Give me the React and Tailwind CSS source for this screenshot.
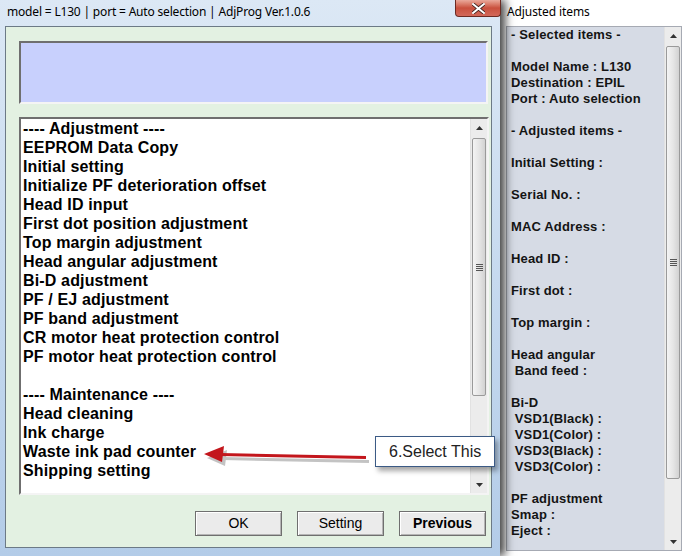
import React from "react";

const listItems = [
  "---- Adjustment ----",
  "EEPROM Data Copy",
  "Initial setting",
  "Initialize PF deterioration offset",
  "Head ID input",
  "First dot position adjustment",
  "Top margin adjustment",
  "Head angular adjustment",
  "Bi-D adjustment",
  "PF / EJ adjustment",
  "PF band adjustment",
  "CR motor heat protection control",
  "PF motor heat protection control",
  "",
  "---- Maintenance ----",
  "Head cleaning",
  "Ink charge",
  "Waste ink pad counter",
  "Shipping setting",
];

const adjusted = [
  "- Selected items -",
  "",
  "Model Name : L130",
  "Destination : EPIL",
  "Port : Auto selection",
  "",
  "- Adjusted items -",
  "",
  "Initial Setting :",
  "",
  "Serial No. :",
  "",
  "MAC Address :",
  "",
  "Head ID :",
  "",
  "First dot :",
  "",
  "Top margin :",
  "",
  "Head angular",
  " Band feed :",
  "",
  "Bi-D",
  " VSD1(Black) :",
  " VSD1(Color) :",
  " VSD3(Black) :",
  " VSD3(Color) :",
  "",
  "PF adjustment",
  "Smap :",
  "Eject :",
];

function ScrollBar({ thumbTop, thumbHeight }) {
  return (
    <div className="relative w-[17px] h-full bg-[#ececec] border-l border-[#e2e2e2] flex flex-col">
      <div className="h-[17px] flex items-center justify-center">
        <svg width="7" height="4" viewBox="0 0 7 4">
          <path d="M0 4 L3.5 0 L7 4 Z" fill="#333" />
        </svg>
      </div>
      <div className="flex-1" />
      <div className="h-[17px] flex items-center justify-center">
        <svg width="7" height="4" viewBox="0 0 7 4">
          <path d="M0 0 L3.5 4 L7 0 Z" fill="#333" />
        </svg>
      </div>
      <div
        className="absolute left-[1px] right-[1px] rounded-[2px] border border-[#9a9a9a] bg-gradient-to-r from-[#f4f4f4] via-[#e6e6e6] to-[#d2d2d2] flex items-center justify-center"
        style={{ top: thumbTop, height: thumbHeight }}
      >
        <div className="flex flex-col gap-[1px]">
          <div className="w-[7px] h-[1px] bg-[#555]" />
          <div className="w-[7px] h-[1px] bg-[#555]" />
          <div className="w-[7px] h-[1px] bg-[#555]" />
          <div className="w-[7px] h-[1px] bg-[#555]" />
        </div>
      </div>
    </div>
  );
}

function Btn({ children, bold }) {
  return (
    <button
      className={`w-[87px] h-[25px] border border-[#6f6f6f] bg-[#ebebeb] shadow-[inset_1px_1px_0_#ffffff,inset_-1px_-1px_0_#b5b5b5] text-[14px] text-black ${
        bold ? "font-bold" : ""
      }`}
      style={{ fontFamily: '"Liberation Sans", Arial, sans-serif' }}
    >
      {children}
    </button>
  );
}

export default function App() {
  return (
    <div
      className="relative w-[686px] h-[556px] overflow-hidden bg-white flex"
      style={{ fontFamily: '"Liberation Sans", Arial, sans-serif' }}
    >
      {/* left window */}
      <div className="relative w-[500px] h-full bg-gradient-to-b from-[#dce8f5] via-[#c6daef] to-[#b3cce8] flex flex-col pl-[5px] pr-[8px] pb-[8px] z-10 shadow-[5px_0_9px_rgba(0,0,0,0.75)]">
        <div className="h-[26px] flex items-center pl-[2px] pb-[3px]">
          <span
            className="text-[12px] text-black tracking-[-0.18px]"
            style={{ fontFamily: '"Noto Sans", "Open Sans", sans-serif' }}
          >
            model = L130 | port = Auto selection | AdjProg Ver.1.0.6
          </span>
        </div>
        <div className="absolute top-0 left-[455px] w-[46px] h-[17px] rounded-b-[4px] border border-t-0 border-[#6b2a22] bg-gradient-to-b from-[#e9a99b] via-[#c9503d] to-[#d2685a] flex items-center justify-center">
          <svg width="13" height="11" viewBox="0 0 13 11">
            <path
              d="M1 1 L12 10 M12 1 L1 10"
              stroke="#3a1d18"
              strokeWidth="3.6"
              strokeLinecap="square"
            />
            <path
              d="M1 1 L12 10 M12 1 L1 10"
              stroke="#ffffff"
              strokeWidth="2"
              strokeLinecap="square"
            />
          </svg>
        </div>

        <div className="flex-1 bg-[#e3f1e2] border border-[#6c7a86] flex flex-col pt-[14px] pl-[13px] pr-[4px]">
          <div className="h-[63px] w-[469px] bg-[#c8d0fd] border-2 border-t-[#6f6f6f] border-l-[#6f6f6f] border-r-[#f4f4f4] border-b-[#f4f4f4]" />
          <div className="mt-[13px] h-[378px] w-[470px] bg-white border-2 border-t-[#6f6f6f] border-l-[#6f6f6f] border-r-[#f4f4f4] border-b-[#f4f4f4] flex">
            <div className="flex-1 pl-[2px] pt-0">
              {listItems.map((t, i) => (
                <div
                  key={i}
                  className="h-[19px] leading-[19px] text-[16px] font-bold text-black whitespace-pre tracking-[0.15px]"
                >
                  {t || " "}
                </div>
              ))}
            </div>
            <ScrollBar thumbTop={19} thumbHeight={258} />
          </div>
          <div className="flex justify-end gap-[15px] pr-[1px] mt-[16px]">
            <Btn>OK</Btn>
            <Btn>Setting</Btn>
            <Btn bold>Previous</Btn>
          </div>
        </div>
      </div>

      {/* right window */}
      <div className="flex-1 flex flex-col">
        <div className="h-[26px] flex items-center pl-[7px] pb-[2px]">
          <span
            className="text-[12px] text-black tracking-[-0.1px]"
            style={{ fontFamily: '"Noto Sans", "Open Sans", sans-serif' }}
          >
            Adjusted items
          </span>
        </div>
        <div className="ml-[6px] mr-[4px] h-[525px] bg-[#d6dbe5] border border-[#a6aab3] flex">
          <div className="flex-1 pl-[4px] pt-0">
            {adjusted.map((t, i) => (
              <div
                key={i}
                className="h-[16px] leading-[16px] text-[13px] font-bold text-[#141414] whitespace-pre tracking-[0.15px]"
              >
                {t || " "}
              </div>
            ))}
          </div>
          <ScrollBar thumbTop={19} thumbHeight={433} />
        </div>
      </div>

      {/* annotation arrow */}
      <svg
        className="absolute left-0 top-0 z-20 pointer-events-none"
        width="686"
        height="556"
      >
        <g transform="translate(3,4)" opacity="0.35">
          <path d="M366 457.5 L220 454.5" stroke="#555" strokeWidth="3" />
          <path d="M204 454 L224 446 L222 462 Z" fill="#555" />
        </g>
        <path d="M366 457.5 L220 454.5" stroke="#c3161c" strokeWidth="3" />
        <path d="M204 454 L224 446 L222 462 Z" fill="#c3161c" />
      </svg>
      <div className="absolute left-[375px] top-[436px] z-20 w-[120px] h-[31px] bg-white border border-[#3b5a85] shadow-[3px_4px_5px_rgba(0,0,0,0.35)] flex items-center pl-[13px]">
        <span className="text-[16px] text-[#222]">6.Select This</span>
      </div>
    </div>
  );
}
